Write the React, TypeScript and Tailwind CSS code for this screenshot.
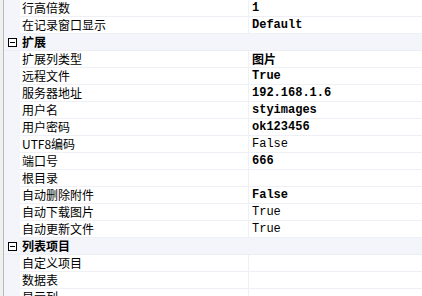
import React from "react";

type Row =
  | { kind: "cat"; label: string }
  | { kind: "item"; label: string; value?: string; bold?: boolean };

const rows: Row[] = [
  { kind: "item", label: "行高倍数", value: "1", bold: true },
  { kind: "item", label: "在记录窗口显示", value: "Default", bold: true },
  { kind: "cat", label: "扩展" },
  { kind: "item", label: "扩展列类型", value: "图片", bold: true },
  { kind: "item", label: "远程文件", value: "True", bold: true },
  { kind: "item", label: "服务器地址", value: "192.168.1.6", bold: true },
  { kind: "item", label: "用户名", value: "styimages", bold: true },
  { kind: "item", label: "用户密码", value: "ok123456", bold: true },
  { kind: "item", label: "UTF8编码", value: "False" },
  { kind: "item", label: "端口号", value: "666", bold: true },
  { kind: "item", label: "根目录", value: "" },
  { kind: "item", label: "自动删除附件", value: "False", bold: true },
  { kind: "item", label: "自动下载图片", value: "True" },
  { kind: "item", label: "自动更新文件", value: "True" },
  { kind: "cat", label: "列表项目" },
  { kind: "item", label: "自定义项目", value: "" },
  { kind: "item", label: "数据表", value: "" },
  { kind: "item", label: "显示列", value: "" },
];

const cjk = { fontFamily: '"Noto Sans CJK SC", "Noto Sans", sans-serif' };
const mono = { fontFamily: '"Liberation Mono", "Noto Sans CJK SC", monospace' };

function Minus() {
  return (
    <div className="w-[9px] h-[9px] border border-black bg-white flex items-center justify-center">
      <div className="w-[5px] h-px bg-black" />
    </div>
  );
}

export default function App() {
  return (
    <div className="w-[422px] h-[296px] overflow-hidden bg-[#f0f0f0] flex text-black text-[12px]">
      <div className="w-[3px] shrink-0 bg-[#f0f0f0]" />
      <div className="w-px shrink-0 bg-[#b8b8b8]" />
      <div className="flex-1 flex flex-col bg-white">
        {rows.map((r, i) =>
          r.kind === "cat" ? (
            <div key={i} className="h-[17px] shrink-0 flex items-center bg-[#f4f5fa] border-b border-[#eceef4]">
              <div className="w-[16px] shrink-0 flex items-center justify-center pl-[1px]">
                <Minus />
              </div>
              <div className="pl-[2px] font-bold leading-none" style={cjk}>
                {r.label}
              </div>
            </div>
          ) : (
            <div key={i} className="h-[17px] shrink-0 flex">
              <div className="w-[16px] shrink-0 bg-[#f4f5fa]" />
              <div className="flex-1 flex border-b border-[#eef0f5]">
                <div className="w-[229px] shrink-0 pl-[2px] flex items-center border-r border-[#eef0f5] leading-none" style={cjk}>
                  {r.label}
                </div>
                <div
                  className={`flex-1 pl-[3px] flex items-center leading-none ${r.bold ? "font-bold" : ""}`}
                  style={r.value && /[\u4e00-\u9fff]/.test(r.value) ? cjk : mono}
                >
                  {r.value}
                </div>
              </div>
            </div>
          )
        )}
      </div>
    </div>
  );
}
